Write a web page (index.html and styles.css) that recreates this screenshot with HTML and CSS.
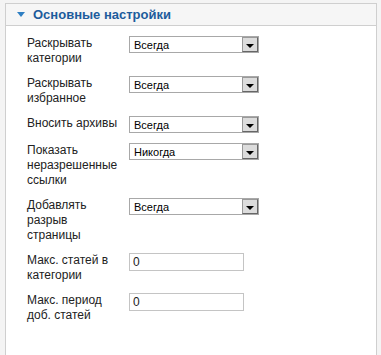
FILE: index.html
```html
<!DOCTYPE html>
<html lang="ru">
<head>
  <meta charset="UTF-8" />
  <title>Основные настройки</title>
  <link rel="stylesheet" href="styles.css">
</head>
<body>

  <div class="panel">
    <div class="panel-head">
      <span class="toggle"></span>
      <h3>Основные настройки</h3>
    </div>

    <div class="panel-body">
      <div class="row">
        <label>Раскрывать категории</label>
        <div class="select"><span>Всегда</span><i class="arrow"></i></div>
      </div>
      <div class="row">
        <label>Раскрывать избранное</label>
        <div class="select"><span>Всегда</span><i class="arrow"></i></div>
      </div>
      <div class="row">
        <label>Вносить архивы</label>
        <div class="select"><span>Всегда</span><i class="arrow"></i></div>
      </div>
      <div class="row">
        <label>Показать неразрешенные ссылки</label>
        <div class="select"><span>Никогда</span><i class="arrow"></i></div>
      </div>
      <div class="row">
        <label>Добавлять разрыв страницы</label>
        <div class="select"><span>Всегда</span><i class="arrow"></i></div>
      </div>
      <div class="row">
        <label>Макс. статей в категории</label>
        <input type="text" value="0" />
      </div>
      <div class="row">
        <label>Макс. период доб. статей</label>
        <input type="text" value="0" />
      </div>
    </div>
  </div>

</body>
</html>
```

FILE: styles.css
```css
* {
  box-sizing: border-box;
  margin: 0;
  padding: 0;
}

body {
  background: #f4f4f4;
  font-family: 'Liberation Sans', Arial, sans-serif;
  padding: 3px 4px 0 5px;
  height: 355px;
  overflow: hidden;
}

.panel {
  background: #fff;
  border: 1px solid #cfcfcf;
  height: 360px;
}

.panel-head {
  display: flex;
  align-items: center;
  height: 22px;
  padding-left: 11px;
  background: #f6f6f6;
  border-bottom: 1px solid #cfcfcf;
}

/* small blue triangle pointing down */
.toggle {
  width: 0;
  height: 0;
  border-left: 4px solid transparent;
  border-right: 4px solid transparent;
  border-top: 5px solid #2f7fc3;
  margin-right: 8px;
}

.panel-head h3 {
  font-size: 13px;
  font-weight: bold;
  color: #1d5c9c;
}

.panel-body {
  padding: 10px 0 0 21px;
}

.row {
  display: flex;
  align-items: flex-start;
  margin-bottom: 10px;
}

.row label {
  width: 92px;
  margin-right: 10px;
  font-size: 12px;
  line-height: 15px;
  color: #222;
}

.select {
  display: flex;
  align-items: center;
  width: 130px;
  height: 17px;
  border: 1px solid #a8a8a8;
  background: #fff;
  font-size: 11px;
  color: #000;
}

.select span {
  flex: 1;
  padding-left: 4px;
}

.arrow {
  position: relative;
  width: 16px;
  height: 15px;
  background: #dcdcdc;
  border: 1px solid #777;
  border-color: #999 #666 #666 #999;
}

.arrow::after {
  content: '';
  position: absolute;
  left: 3px;
  top: 6px;
  border-left: 4px solid transparent;
  border-right: 4px solid transparent;
  border-top: 4px solid #000;
}

input[type="text"] {
  width: 115px;
  height: 18px;
  border: 1px solid #c4c4c4;
  padding: 0 3px;
  font-family: 'Liberation Sans', Arial, sans-serif;
  font-size: 12px;
  color: #222;
}
```
